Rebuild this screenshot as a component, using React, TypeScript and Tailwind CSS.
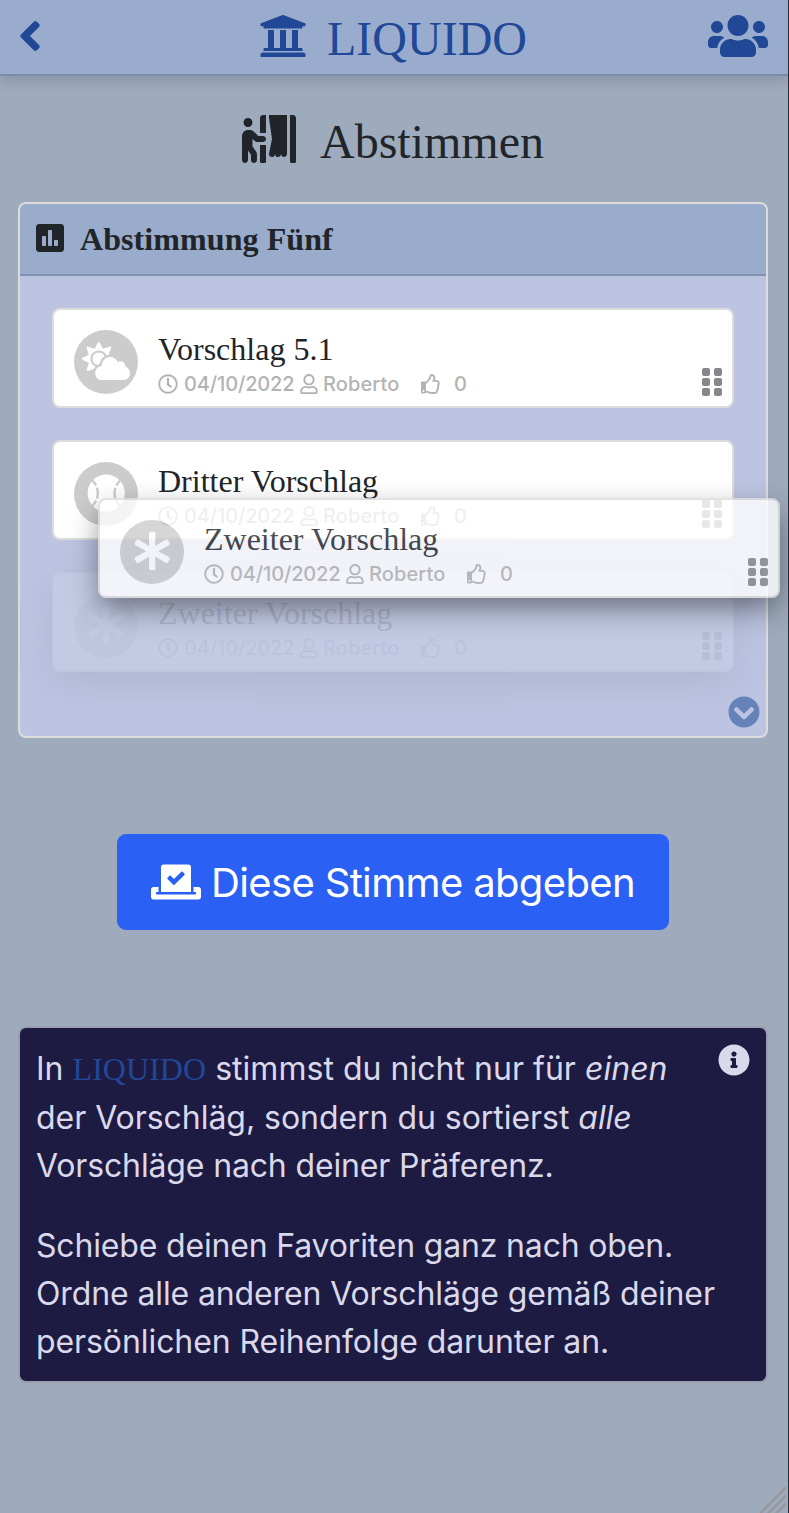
import type { ReactNode } from "react";
import {
  FaAngleLeft,
  FaAsterisk,
  FaBaseballBall,
  FaChevronCircleDown,
  FaCloudSun,
  FaGripVertical,
  FaInfoCircle,
  FaPersonBooth,
  FaPoll,
  FaRegClock,
  FaRegThumbsUp,
  FaRegUser,
  FaUniversity,
  FaUsers,
  FaVoteYea,
} from "react-icons/fa";

type CardProps = { title: string; icon: ReactNode; className?: string };

function ProposalCard({ title, icon, className = "" }: CardProps) {
  return (
    <article
      className={`flex h-[100px] w-[682px] rounded-lg border-2 border-[#dcdcdc] bg-white pl-5 ${className}`}
    >
      <div className="mt-5 flex size-16 shrink-0 items-center justify-center rounded-full bg-[#cccccc] pb-[2px] text-white">
        {icon}
      </div>
      <div className="ml-5 flex-1 pt-[20px]">
        <h3 className="font-['Liberation_Serif',serif] text-[32px] leading-[38px] text-[#212529]">{title}</h3>
        <div className="mt-[4px] flex h-6 items-center text-[20px] font-medium leading-6 text-[#b3b3b3]">
          <FaRegClock className="mr-[6px] size-5" />
          <span className="w-[116px] tracking-[-0.15px]">04/10/2022</span>
          <FaRegUser className="h-5 w-[18px]" />
          <span className="ml-[5px] w-[98px] tracking-[0.1px]">Roberto</span>
          <FaRegThumbsUp className="size-5" />
          <span className="ml-[13px]">0</span>
        </div>
      </div>
      <FaGripVertical className="mr-[10px] mb-2 h-8 w-5 self-end text-[#85878b]" />
    </article>
  );
}

export default function App() {
  return (
    <div className="h-[1513px] w-[789px] overflow-hidden border-r border-[#2a2d33] bg-[#9eabbd] font-['Inter',sans-serif]">
      <header className="flex h-[76px] items-start justify-between border-b-2 border-[#7b8aa5] bg-[#9aaccd] pt-3 pr-5 pl-[18px] text-[#204896] shadow-[0_4px_12px_rgba(0,0,0,0.15)]">
        <FaAngleLeft className="h-12 w-6" />
        <div className="ml-[36px] flex">
          <FaUniversity className="size-12" />
          <span className="ml-5 font-['Liberation_Serif',serif] text-[48px] leading-[54px]">LIQUIDO</span>
        </div>
        <FaUsers className="h-12 w-[60px]" />
      </header>

      <main className="relative px-[18px]">
        <h1 className="flex h-[126px] items-start justify-center pt-[39px] pr-[2px] text-[#212529]">
          <FaPersonBooth className="h-12 w-[54px]" />
          <span className="ml-6 font-['Liberation_Serif',serif] text-[48px] leading-[54px]">Abstimmen</span>
        </h1>

        <section className="relative h-[536px] w-[750px] overflow-hidden rounded-lg border-2 border-[#dcdcdc] bg-[#bdc4e1]">
          <h2 className="flex h-[72px] items-center border-b-2 border-[#8392b2] bg-[#9aaccc] pl-4 text-[#212529]">
            <FaPoll className="mb-[2px] h-8 w-7" />
            <span className="ml-4 font-['Liberation_Serif',serif] text-[32px] font-bold leading-9 tracking-[0.08px]">
              Abstimmung Fünf
            </span>
          </h2>
          <div className="flex flex-col gap-8 px-8 pt-8">
            <ProposalCard title="Vorschlag 5.1" icon={<FaCloudSun className="h-[38.4px] w-12" />} />
            <ProposalCard title="Dritter Vorschlag" icon={<FaBaseballBall className="size-[38.4px]" />} />
            <ProposalCard
              title="Zweiter Vorschlag"
              icon={<FaAsterisk className="size-[38.4px]" />}
              className="opacity-10 shadow-[0_12px_40px_rgba(0,0,0,0.7)]"
            />
          </div>
          <FaChevronCircleDown className="absolute right-[6px] bottom-[8px] size-8 text-[#6582b9]" />
        </section>

        <ProposalCard
          title="Zweiter Vorschlag"
          icon={<FaAsterisk className="size-[38.4px]" />}
          className="absolute top-[422px] left-[98px] opacity-80 shadow-[0_12px_30px_-3px_rgba(0,0,0,0.6)]"
        />

        <div className="mt-24 flex justify-center pr-[2px]">
          <button className="flex h-24 w-[552px] items-center rounded-[9px] bg-[#2b60f5] pl-[34px] text-[40px] text-white">
            <FaVoteYea className="h-10 w-[50px]" />
            <span className="ml-[10px] pt-[2px] tracking-[-0.65px] whitespace-nowrap">Diese Stimme abgeben</span>
          </button>
        </div>

        <section className="relative mt-[96px] h-[357px] w-[750px] rounded-lg border-2 border-[#9b9cb0] bg-[#1e1b43] px-4 pt-[17px] text-[32px] leading-[48px] text-[#dad9ec]">
          <p className="whitespace-nowrap">
            <span className="block h-[49px] tracking-[0.03px]">
              In <span className="font-['Liberation_Serif',serif] text-[#204896]">LIQUIDO</span> stimmst du nicht nur für{" "}
              <em>einen</em>
            </span>
            <span className="block tracking-[-0.04px]">
              der Vorschläg, sondern du sortierst <em>alle</em>
            </span>
            <span className="block tracking-[-0.15px]">Vorschläge nach deiner Präferenz.</span>
          </p>
          <p className="mt-8 whitespace-nowrap">
            <span className="block tracking-[-0.17px]">Schiebe deinen Favoriten ganz nach oben.</span>
            <span className="block tracking-[-0.12px]">Ordne alle anderen Vorschläge gemäß deiner</span>
            <span className="block tracking-[-0.08px]">persönlichen Reihenfolge darunter an.</span>
          </p>
          <FaInfoCircle className="absolute top-4 right-4 size-8" />
        </section>
      </main>

      <svg className="absolute top-[1486px] left-[760px] h-[27px] w-[26px]" viewBox="0 0 26 27" stroke="#97999e" strokeWidth="2.5">
        <path d="M0 27.500 27 .5M8 27.500 27 8.500M16 27.500 27 16.500" />
      </svg>
    </div>
  );
}
